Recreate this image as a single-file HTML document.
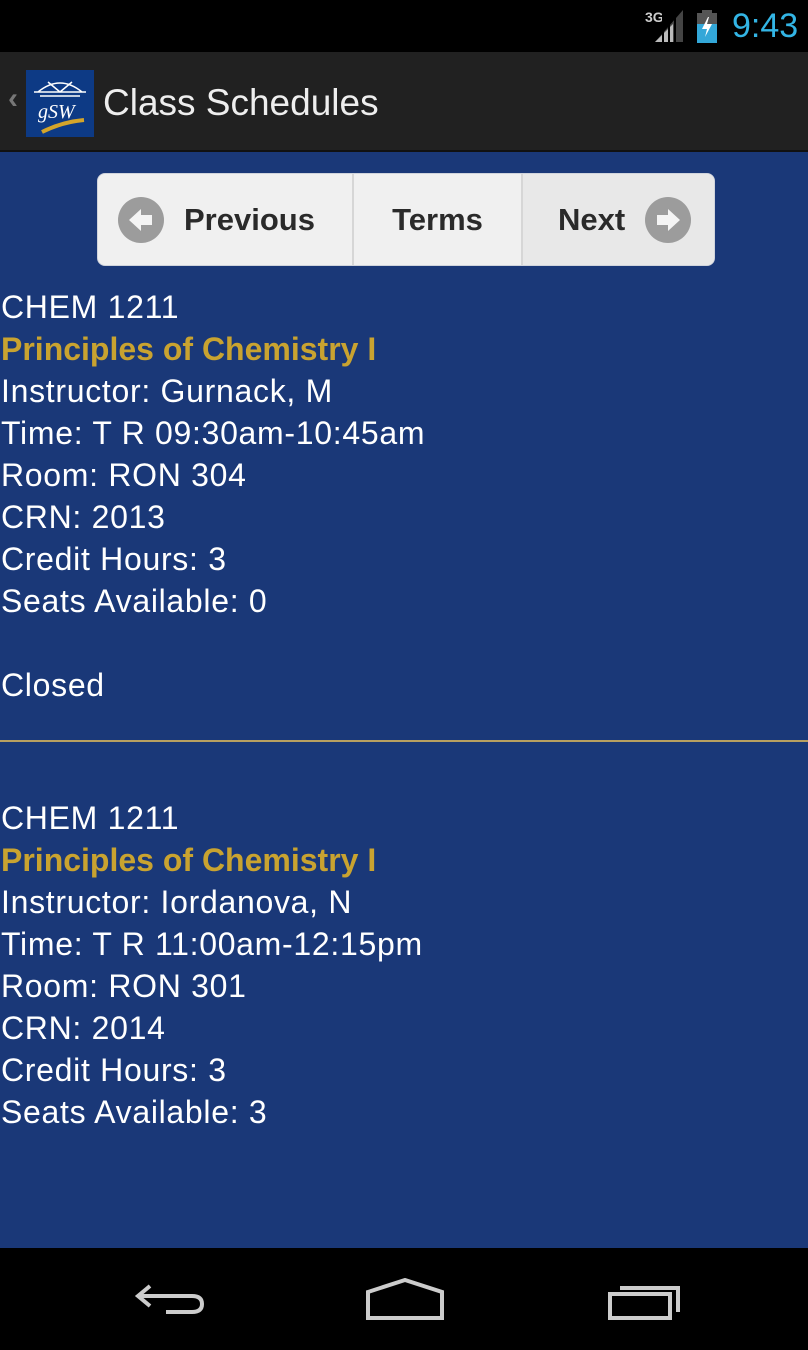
<!DOCTYPE html>
<html><head><meta charset="utf-8"><style>
*{margin:0;padding:0;box-sizing:border-box}
body{width:808px;height:1350px;overflow:hidden;background:#1a3878;font-family:"Liberation Sans",sans-serif;position:relative}
.sb{position:absolute;left:0;top:0;width:808px;height:52px;background:#000}
.ab{position:absolute;left:0;top:52px;width:808px;height:100px;background:#212121;border-bottom:2px solid #111}
.nb{position:absolute;left:0;top:1248px;width:808px;height:102px;background:#000}
.grp{position:absolute;left:97px;top:173px;width:618px;height:93px;background:#f0f0f0;border:1px solid #d0d4dc;border-radius:8px;display:flex;overflow:hidden}
.seg{height:100%;display:flex;align-items:center;font-weight:bold;font-size:31px;color:#2a2a2a}
.circ{width:46px;height:46px;border-radius:50%;background:#9c9c9c;display:flex;align-items:center;justify-content:center}
.txt{position:absolute;left:1px;color:#fff;font-size:32px;line-height:42px;letter-spacing:0.7px}
.gold{color:#c9a330;font-weight:bold;letter-spacing:0}
</style></head><body>
<div class="sb">
<span style="position:absolute;left:645px;top:9px;color:#ccc;font-size:14px;font-weight:bold">3G</span>
<svg style="position:absolute;left:655px;top:10px" width="30" height="33"><polygon points="28,0 28,32 0,32" fill="#444"/><polygon points="18,14 18,32 0,32 14,18" fill="#bbb"/><g stroke="#000" stroke-width="2"><line x1="8" y1="0" x2="8" y2="33"/><line x1="14" y1="0" x2="14" y2="33"/><line x1="20" y1="0" x2="20" y2="33"/></g></svg>
<svg style="position:absolute;left:695px;top:10px" width="24" height="33"><rect x="7" y="0" width="10" height="3" fill="#555"/><rect x="2" y="3" width="20" height="30" fill="#555"/><rect x="2" y="14" width="20" height="19" fill="#33a7d8"/><polygon points="13,7 7,19 12,19 10,27 17,14 12,14 14,7" fill="#fff"/></svg>
<span style="position:absolute;left:732px;top:7px;color:#33b5e5;font-size:34px">9:43</span>
</div>
<div class="ab">
<span style="position:absolute;left:8px;top:30px;color:#777;font-size:30px;font-weight:bold">‹</span>
<div style="position:absolute;left:26px;top:18px;width:68px;height:67px;background:#0d3a85">
<svg width="68" height="67"><path d="M12 22 Q34 4 56 22 M8 22 H60 M14 26 H54 M22 12 L34 22 L46 12" stroke="#fff" stroke-width="1.5" fill="none"/><text x="12" y="48" fill="#fff" font-size="20" font-style="italic" font-family="Liberation Serif">gSW</text><path d="M16 62 Q36 52 58 50" stroke="#d4a52a" stroke-width="4" fill="none"/></svg></div>
<span style="position:absolute;left:103px;top:30px;color:#eee;font-size:37px">Class Schedules</span>
</div>
<div class="grp">
<div class="seg" style="width:256px;border-right:2px solid #d6d6d6;padding-left:20px"><div class="circ"><svg width="30" height="30"><polygon points="3,15 15,4 15,10 26,10 26,20 15,20 15,26" fill="#f4f4f4"/></svg></div><span style="margin-left:20px">Previous</span></div>
<div class="seg" style="width:169px;border-right:2px solid #d6d6d6;justify-content:center">Terms</div>
<div class="seg" style="flex:1;background:#e8e8e8;padding-left:35px">Next<div class="circ" style="margin-left:20px"><svg width="30" height="30"><polygon points="27,15 15,4 15,10 4,10 4,20 15,20 15,26" fill="#f4f4f4"/></svg></div></div>
</div>
<div class="txt" style="top:286px">CHEM 1211<br><span class="gold">Principles of Chemistry I</span><br>Instructor: Gurnack, M<br>Time: T R 09:30am-10:45am<br>Room: RON 304<br>CRN: 2013<br>Credit Hours: 3<br>Seats Available: 0<br><br>Closed</div>
<div style="position:absolute;left:0;top:740px;width:808px;height:2px;background:#b8a060"></div>
<div class="txt" style="top:797px">CHEM 1211<br><span class="gold">Principles of Chemistry I</span><br>Instructor: Iordanova, N<br>Time: T R 11:00am-12:15pm<br>Room: RON 301<br>CRN: 2014<br>Credit Hours: 3<br>Seats Available: 3</div>
<div class="nb">
<svg style="position:absolute;left:130px;top:30px" width="80" height="45"><path d="M20 8 L8 18 L20 28 M8 18 H62 Q72 18 72 26 Q72 34 62 34 H36" stroke="#ccc" stroke-width="4" fill="none"/></svg>
<svg style="position:absolute;left:364px;top:30px" width="82" height="45"><path d="M4 14 L41 2 L78 14 V40 H4 Z" stroke="#ccc" stroke-width="4" fill="none"/></svg>
<svg style="position:absolute;left:604px;top:30px" width="80" height="45"><path d="M6 16 H66 V40 H6 Z M16 10 H74 V34" stroke="#ccc" stroke-width="4" fill="none"/></svg>
</div>
</body></html>
